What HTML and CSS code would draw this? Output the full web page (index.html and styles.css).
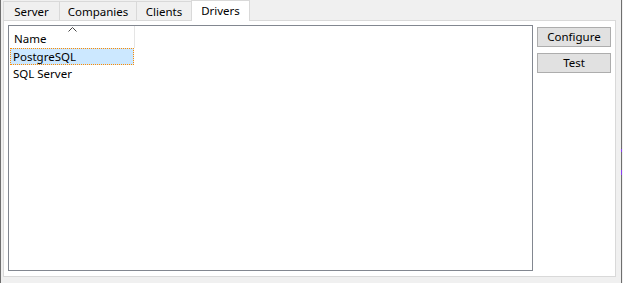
FILE: index.html
```html
<!DOCTYPE html>
<html>
<head>
<meta charset="utf-8">
<link rel="stylesheet" href="styles.css">
</head>
<body>
<div class="frame">
  <div class="tabs">
    <div class="tab t-server">Server</div>
    <div class="tab t-companies">Companies</div>
    <div class="tab t-clients">Clients</div>
    <div class="tab t-drivers active">Drivers</div>
  </div>
  <div class="panel">
    <div class="list">
      <div class="header">
        <div class="col">Name<span class="sort"><svg width="9" height="5" viewBox="0 0 9 5"><path d="M0.5 4.5 L4.5 0.5 L8.5 4.5" fill="none" stroke="#444" stroke-width="1"/></svg></span></div>
      </div>
      <div class="row selected">PostgreSQL</div>
      <div class="row">SQL Server</div>
    </div>
    <div class="buttons">
      <button class="btn">Configure</button>
      <button class="btn">Test</button>
    </div>
  </div>
  <span class="mark m1"></span>
  <span class="mark m2"></span>
</div>
</body>
</html>
```
FILE: styles.css
```css
html, body {
  margin: 0;
  padding: 0;
  background: #f0f0f0;
}
body {
  width: 623px;
  height: 283px;
  overflow: hidden;
  font-family: "Noto Sans", "Open Sans", sans-serif;
  font-size: 11.5px;
  color: #000;
}
.frame {
  position: relative;
  box-sizing: border-box;
  width: 622px;
  height: 283px;
  border-left: 1px solid #6e6e6e;
  border-right: 1px solid #6e6e6e;
  padding-left: 2px;
}
.tabs {
  display: flex;
  height: 20px;
  align-items: flex-end;
  position: relative;
  z-index: 1;
}
.tab {
  box-sizing: border-box;
  height: 19px;
  border: 1px solid #d9d9d9;
  border-bottom: none;
  border-right: none;
  background: #f0f0f0;
  display: flex;
  align-items: center;
  justify-content: center;
  padding-top: 1px;
}
.t-server { width: 56px; }
.t-companies { width: 77px; }
.t-clients { width: 55px; }
.t-drivers { width: 59px; }
.tab.active {
  height: 21px;
  margin-bottom: -1px;
  background: #fff;
  border-right: 1px solid #d9d9d9;
  padding-top: 0;
  padding-bottom: 2px;
}
.panel {
  box-sizing: border-box;
  width: 613px;
  height: 257px;
  border: 1px solid #d9d9d9;
  background: #fff;
  display: flex;
  padding: 4px 4px 5px 4px;
  gap: 4px;
}
.list {
  box-sizing: border-box;
  width: 525px;
  height: 246px;
  border: 1px solid #828790;
  background: #fff;
  padding-left: 1px;
}
.header {
  height: 22px;
  display: flex;
}
.col {
  position: relative;
  box-sizing: border-box;
  width: 125px;
  height: 22px;
  border-right: 1px solid #e5e5e5;
  padding: 5px 0 0 4px;
  line-height: 16px;
}
.sort {
  position: absolute;
  left: 58px;
  top: 1px;
  line-height: 0;
}
.row {
  box-sizing: border-box;
  width: 124px;
  height: 17px;
  line-height: 15px;
  padding-left: 2px;
  border: 1px solid transparent;
}
.row.selected {
  background: #cce8ff;
  border: 1px dotted #ff8c00;
}
.buttons {
  display: flex;
  flex-direction: column;
  gap: 6px;
  padding-top: 2px;
}
.btn {
  box-sizing: border-box;
  width: 74px;
  height: 20px;
  background: #e1e1e1;
  border: 1px solid #adadad;
  font-family: inherit;
  font-size: 11.5px;
  padding: 0;
  color: #000;
  line-height: 16px;
}
.mark {
  position: absolute;
  right: -1px;
  width: 1px;
  background: #8a3ff0;
}
.m1 { top: 149px; height: 3px; }
.m2 { top: 170px; height: 5px; }
```
